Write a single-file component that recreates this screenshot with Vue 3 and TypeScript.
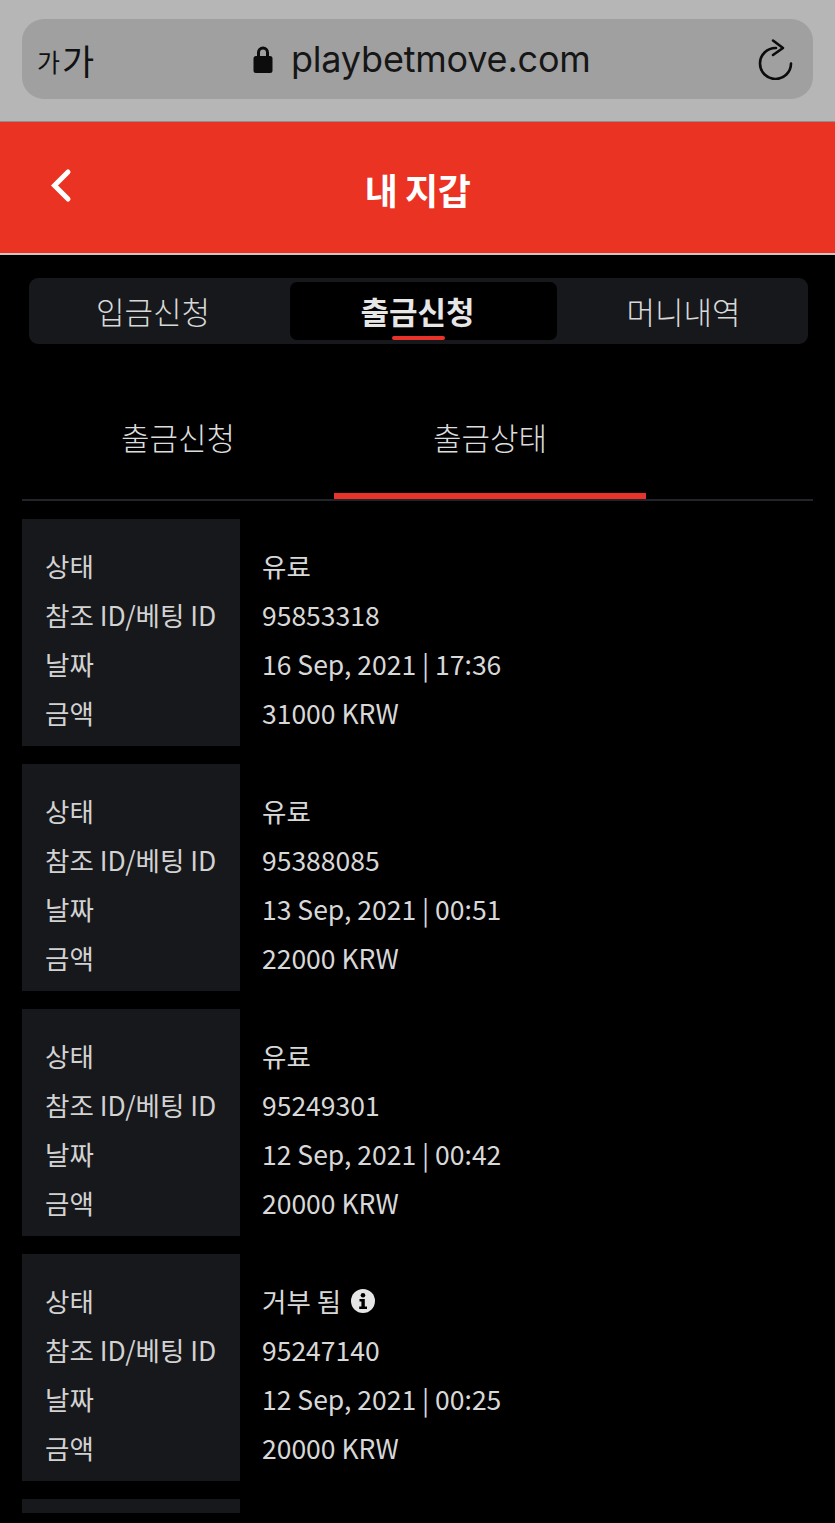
<script setup lang="ts">
interface Txn { status: string; id: string; date: string; amount: string; info?: boolean }
const txns: Txn[] = [
  { status: '유료', id: '95853318', date: '16 Sep, 2021 | 17:36', amount: '31000 KRW' },
  { status: '유료', id: '95388085', date: '13 Sep, 2021 | 00:51', amount: '22000 KRW' },
  { status: '유료', id: '95249301', date: '12 Sep, 2021 | 00:42', amount: '20000 KRW' },
  { status: '거부 됨', id: '95247140', date: '12 Sep, 2021 | 00:25', amount: '20000 KRW', info: true },
]
</script>

<template>
  <div class="page">
    <div class="browser">
      <div class="urlbar">
        <span class="aa"><span class="aa-small">가</span><span class="aa-big">가</span></span>
        <div class="addr">
          <svg class="lock" viewBox="0 0 20 28" width="20" height="28">
            <path d="M5.5 13V7.5a4.5 4.5 0 0 1 9 0V13" fill="none" stroke="#0c0c0c" stroke-width="3" />
            <rect x="0.5" y="11" width="19" height="17" rx="2.5" fill="#0c0c0c" />
          </svg>
          <span class="url">playbetmove.com</span>
        </div>
        <svg class="reload" viewBox="0 0 36 42" width="36" height="42">
          <path d="M19 10A15.5 15.5 0 1 0 34 25.5" fill="none" stroke="#0c0c0c" stroke-width="2.6" stroke-linecap="round" />
          <path d="M16 2.5 26 10 16 17" fill="none" stroke="#0c0c0c" stroke-width="2.6" stroke-linecap="round" stroke-linejoin="round" />
        </svg>
      </div>
    </div>

    <header class="head">
      <svg class="back" viewBox="0 0 24 38" width="24" height="38">
        <path d="M19 6 5.5 19.5 19 33" fill="none" stroke="#fff" stroke-width="5" stroke-linecap="round" stroke-linejoin="miter" />
      </svg>
      <h1>내 지갑</h1>
    </header>

    <nav class="tabs">
      <div class="tab first">입금신청</div>
      <div class="tab active">출금신청</div>
      <div class="tab last">머니내역</div>
    </nav>

    <div class="subtabs">
      <div class="sub">출금신청</div>
      <div class="sub on">출금상태</div>
    </div>

    <section class="list">
      <article v-for="t in txns" :key="t.id" class="card">
        <div class="labels">
          <div>상태</div>
          <div>참조 ID/베팅 ID</div>
          <div>날짜</div>
          <div>금액</div>
        </div>
        <div class="values">
          <div class="status">
            {{ t.status }}
            <svg v-if="t.info" class="info" viewBox="0 0 24 24" width="24" height="24">
              <circle cx="12" cy="12" r="12" fill="#e6e6e6" />
              <circle cx="12" cy="6.3" r="2.3" fill="#000" />
              <path d="M8.5 10h5.3v7.4H16V20H8.2v-2.6h2.2v-4.8H8.5z" fill="#000" />
            </svg>
          </div>
          <div>{{ t.id }}</div>
          <div>{{ t.date }}</div>
          <div>{{ t.amount }}</div>
        </div>
      </article>
      <div class="stub"></div>
    </section>
  </div>
</template>

<style>
html, body { margin: 0; background: #000; }
</style>

<style scoped>
.page {
  width: 835px;
  height: 1523px;
  overflow: hidden;
  background: #000;
  font-family: "Noto Sans CJK KR", "Noto Sans", sans-serif;
  color: #e2e2e2;
}
.browser {
  height: 122px;
  box-sizing: border-box;
  padding: 19px 22px 0;
  background: #b6b6b6;
  border-bottom: 1px solid #8e8e8e;
}
.urlbar {
  height: 80px;
  border-radius: 22px;
  background: #a0a0a0;
  position: relative;
  display: flex;
  align-items: center;
  justify-content: space-between;
  padding: 0 20px 0 15px;
  color: #111;
}
.aa { display: inline-flex; align-items: center; line-height: 1; }
.aa-small { font-size: 25px; margin-right: 2px; padding-top: 4px; }
.aa-big { font-size: 35px; }
.addr {
  position: absolute;
  left: 231px;
  top: 0;
  height: 80px;
  display: flex;
  align-items: center;
  gap: 18px;
}
.url {
  font-family: Inter, "Liberation Sans", sans-serif;
  font-size: 36px;
  letter-spacing: -0.2px;
  color: #161616;
}
.head {
  height: 133px;
  box-sizing: border-box;
  padding-top: 3px;
  background: #ea3323;
  border-bottom: 2px solid #cfc6c4;
  position: relative;
  display: flex;
  align-items: center;
  justify-content: center;
}
.head h1 {
  margin: 0;
  font-size: 36px;
  font-weight: 700;
  color: #fff;
  line-height: 1;
  letter-spacing: -0.5px;
}
.back { position: absolute; left: 49px; top: 44px; }
.tabs {
  margin: 23px 27px 0 29px;
  height: 66px;
  box-sizing: border-box;
  padding: 4px;
  border-radius: 9px;
  background: #17181c;
  display: grid;
  grid-template-columns: 257px 267px 1fr;
}
.tab {
  display: flex;
  align-items: center;
  justify-content: center;
  font-size: 31px;
  line-height: 1;
  color: #d8d8d8;
  border-radius: 7px;
  position: relative;
  font-weight: 300;
  padding-bottom: 1px;
}
.tab.first { padding-right: 17px; }
.tab.last { padding-left: 6px; }
.tab.active {
  background: #000;
  font-weight: 700;
  color: #e6e6e6;
  padding-right: 12px;
}
.tab.active::after {
  content: "";
  position: absolute;
  left: 102px;
  bottom: 0;
  width: 53px;
  height: 4px;
  border-radius: 2px;
  background: #e8332a;
}
.subtabs {
  margin: 34px 22px 0;
  height: 123px;
  box-sizing: border-box;
  display: grid;
  grid-template-columns: 312px 312px;
  border-bottom: 2px solid #23242b;
}
.sub {
  display: flex;
  align-items: center;
  justify-content: center;
  font-size: 31px;
  line-height: 1;
  color: #dcdcdc;
  font-weight: 300;
  padding-bottom: 5px;
  position: relative;
}
.sub.on::after {
  content: "";
  position: absolute;
  left: 0;
  right: 0;
  bottom: 0;
  height: 6px;
  background: #e8332a;
}
.list {
  margin: 18px 22px 0;
  display: flex;
  flex-direction: column;
  gap: 18px;
}
.card {
  display: flex;
  height: 227px;
  font-size: 26.5px;
  line-height: 49px;
}
.labels {
  width: 218px;
  box-sizing: border-box;
  padding: 22px 0 0 23px;
  background: #17181c;
  white-space: nowrap;
  color: #d2d2d2;
}
.values {
  padding: 22px 0 0 22px;
  white-space: nowrap;
  color: #d8d8d8;
}
.status { display: flex; align-items: center; gap: 10px; }
.info { flex: none; }
.stub { width: 218px; height: 14px; background: #17181c; }
</style>
